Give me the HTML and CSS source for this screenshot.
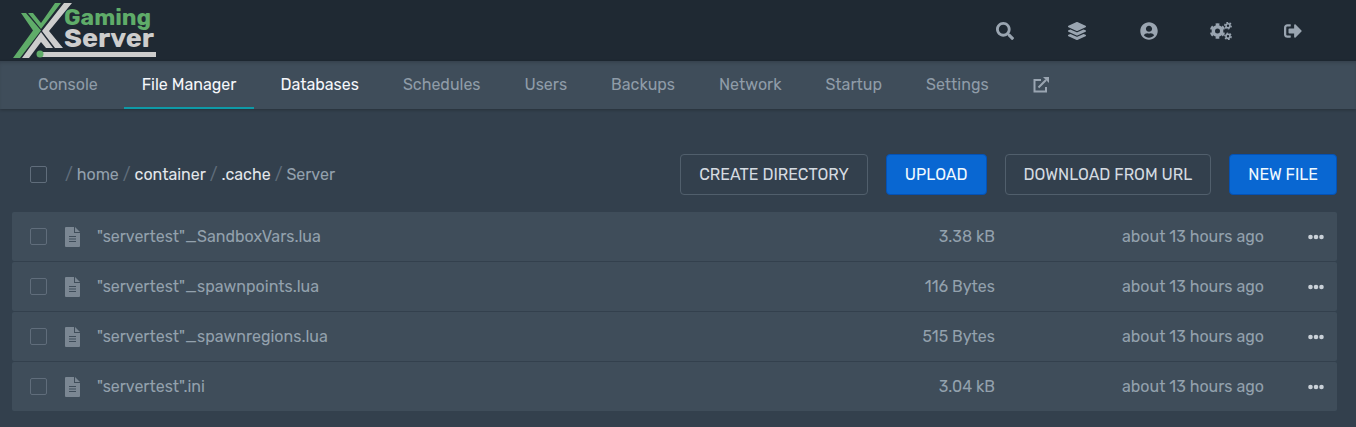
FILE: index.html
```
<!DOCTYPE html>
<html lang="en">
<head>
    <meta charset="UTF-8">
    <meta name="viewport" content="width=device-width, initial-scale=1.0">
    <title>File Manager | XGaming Server</title>
    <link rel="stylesheet" href="styles.css">
</head>
<body>
    <svg class="sprite" aria-hidden="true">
        <symbol id="icon-file" viewBox="0 0 15 20">
            <path fill-rule="evenodd" d="M1 0H9V6H15V19a1 1 0 0 1-1 1H1a1 1 0 0 1-1-1V1a1 1 0 0 1 1-1zM4 9V10H11V9zM4 11.500V12.500H11V11.500zM4 14V15H11V14z"/>
            <path d="M10 0L15 5H10z"/>
        </symbol>
        <symbol id="icon-dots" viewBox="0 0 16 6">
            <circle cx="2.500" cy="3" r="2.300"/>
            <circle cx="8" cy="3" r="2.300"/>
            <circle cx="13.500" cy="3" r="2.300"/>
        </symbol>
    </svg>
    <header class="topbar">
        <a class="logo" href="#" aria-label="XGaming Server">
            <svg width="160" height="61" viewBox="0 0 160 61">
                <g fill="#5fac69">
                    <path d="M21 13h5l15 17.500L20 58h-7l20-27.500z"/>
                    <path d="M28 13h5l8 10L55 3h6L41 29z"/>
                </g>
                <g fill="#cdcdcd">
                    <path d="M64 3h8L49 31l14 17h-8L42 31z"/>
                    <path d="M41 32l12 16h-7l-5-6-12 16h-7z"/>
                    <path d="M38 52h118v5H38z"/>
                </g>
                <circle cx="40" cy="54" r="3.500" fill="#5fac69"/>
                <text class="logo-text logo-green" x="64" y="25">Gaming</text>
                <text class="logo-text logo-grey" x="64" y="47">Server</text>
            </svg>
        </a>
        <nav class="top-links">
            <a href="#" aria-label="Search"><svg width="18" height="18" viewBox="0 0 512 512"><path d="M505 442.700L405.300 343c-4.500-4.500-10.600-7-17-7H372c27.600-35.300 44-79.700 44-128C416 93.100 322.900 0 208 0S0 93.100 0 208s93.100 208 208 208c48.300 0 92.700-16.400 128-44v16.300c0 6.400 2.500 12.500 7 17l99.700 99.700c9.400 9.400 24.600 9.400 33.900 0l28.300-28.300c9.400-9.400 9.400-24.600.1-34zM208 336c-70.700 0-128-57.200-128-128 0-70.700 57.200-128 128-128 70.700 0 128 57.200 128 128 0 70.700-57.200 128-128 128z"/></svg></a>
            <a href="#" aria-label="Servers"><svg width="18" height="18" viewBox="0 0 512 512"><path d="M12.400 148l233 105.700c6.800 3.100 14.500 3.100 21.300 0L499.600 148c16.500-7.500 16.500-32.500 0-40L266.700 2.300a25.600 25.600 0 0 0-21.300 0L12.400 108c-16.500 7.500-16.500 32.500 0 40zm487.200 88.300l-58.100-26.300-161.600 73.300c-7.600 3.400-15.600 5.100-23.900 5.100s-16.300-1.700-23.900-5.100L70.500 210l-58.100 26.300c-16.500 7.500-16.500 32.500 0 40l233 105.600c6.800 3.100 14.500 3.100 21.300 0l232.900-105.600c16.500-7.500 16.500-32.500 0-40zm0 127.800l-57.900-26.200-161.800 73.300c-7.600 3.400-15.600 5.200-23.900 5.200s-16.300-1.800-23.900-5.200L70.300 337.900l-57.900 26.200c-16.500 7.500-16.500 32.500 0 40l233 105.600c6.800 3.100 14.500 3.100 21.300 0l232.900-105.600c16.500-7.500 16.500-32.500 0-40z"/></svg></a>
            <a href="#" aria-label="Account"><svg width="18" height="18" viewBox="-8 0 512 512"><path d="M248 8C111 8 0 119 0 256s111 248 248 248 248-111 248-248S385 8 248 8zm0 96c48.600 0 88 39.400 88 88s-39.400 88-88 88-88-39.400-88-88 39.400-88 88-88zm0 344c-58.700 0-111.300-26.600-146.500-68.200 18.800-35.400 55.600-59.800 98.500-59.800 2.400 0 4.800.4 7.100 1.100 13 4.200 26.600 6.900 40.900 6.900 14.300 0 28-2.700 40.900-6.900 2.300-.7 4.700-1.100 7.100-1.100 42.900 0 79.700 24.400 98.500 59.800C359.300 421.400 306.700 448 248 448z"/></svg></a>
            <a href="#" aria-label="Admin"><svg class="gears" width="22" height="18" viewBox="0 0 22 18">
                <circle cx="7.500" cy="9" r="4.200" stroke-width="3.400"/>
                <circle cx="7.500" cy="9" r="6.500" stroke-width="2.400" stroke-dasharray="3.600 3.100" pathLength="40.200" transform="rotate(14 7.500 9)"/>
                <circle cx="18" cy="3.700" r="2" stroke-width="1.600"/>
                <circle cx="18" cy="3.700" r="3.200" stroke-width="1.400" stroke-dasharray="1.900 1.500" pathLength="20.400"/>
                <circle cx="18" cy="14.300" r="2" stroke-width="1.600"/>
                <circle cx="18" cy="14.300" r="3.200" stroke-width="1.400" stroke-dasharray="1.900 1.500" pathLength="20.400"/>
            </svg></a>
            <a href="#" aria-label="Sign out"><svg width="18" height="18" viewBox="0 0 512 512"><path d="M497 273L329 441c-15 15-41 4.500-41-17v-96H152c-13.300 0-24-10.700-24-24v-96c0-13.300 10.700-24 24-24h136V88c0-21.400 25.900-32 41-17l168 168c9.300 9.400 9.300 24.600 0 34zM192 436v-40c0-6.600-5.400-12-12-12H96c-17.700 0-32-14.300-32-32V160c0-17.700 14.300-32 32-32h84c6.600 0 12-5.400 12-12V76c0-6.600-5.400-12-12-12H96c-53 0-96 43-96 96v192c0 53 43 96 96 96h84c6.600 0 12-5.400 12-12z"/></svg></a>
        </nav>
    </header>
    <nav class="subnav">
        <a href="#">Console</a>
        <a href="#" class="active">File Manager</a>
        <a href="#" class="hover">Databases</a>
        <a href="#">Schedules</a>
        <a href="#">Users</a>
        <a href="#">Backups</a>
        <a href="#">Network</a>
        <a href="#">Startup</a>
        <a href="#">Settings</a>
        <a href="#" aria-label="Open in admin"><svg class="external" width="16" height="16" viewBox="0 0 16 16"><path d="M8 3H1.500v11.500H13V10M5.500 10.500L13 3"/><path class="tip" d="M10 0h6v6z"/></svg></a>
    </nav>
    <main class="content">
        <div class="toolbar">
            <input type="checkbox" class="check" aria-label="Select all files">
            <div class="breadcrumb">
                <span class="slash">/</span><span>home</span>
                <span class="slash">/</span><a href="#">container</a>
                <span class="slash">/</span><a href="#">.cache</a>
                <span class="slash">/</span><span>Server</span>
            </div>
            <div class="actions">
                <button type="button" class="btn">Create Directory</button>
                <button type="button" class="btn btn-primary">Upload</button>
                <button type="button" class="btn">Download from URL</button>
                <button type="button" class="btn btn-primary">New File</button>
            </div>
        </div>
        <table class="files">
            <tbody>
                <tr>
                    <td class="col-check"><input type="checkbox" class="check" id="file1" aria-labelledby="name1"></td>
                    <td class="col-icon"><svg width="15" height="20"><use href="#icon-file"/></svg></td>
                    <td><a href="#" id="name1">"servertest"_SandboxVars.lua</a></td>
                    <td class="col-size">3.38 kB</td>
                    <td class="col-date">about 13 hours ago</td>
                    <td class="col-menu"><button type="button" aria-label="More"><svg width="16" height="6"><use href="#icon-dots"/></svg></button></td>
                </tr>
                <tr>
                    <td class="col-check"><input type="checkbox" class="check" id="file2" aria-labelledby="name2"></td>
                    <td class="col-icon"><svg width="15" height="20"><use href="#icon-file"/></svg></td>
                    <td><a href="#" id="name2">"servertest"_spawnpoints.lua</a></td>
                    <td class="col-size">116 Bytes</td>
                    <td class="col-date">about 13 hours ago</td>
                    <td class="col-menu"><button type="button" aria-label="More"><svg width="16" height="6"><use href="#icon-dots"/></svg></button></td>
                </tr>
                <tr>
                    <td class="col-check"><input type="checkbox" class="check" id="file3" aria-labelledby="name3"></td>
                    <td class="col-icon"><svg width="15" height="20"><use href="#icon-file"/></svg></td>
                    <td><a href="#" id="name3">"servertest"_spawnregions.lua</a></td>
                    <td class="col-size">515 Bytes</td>
                    <td class="col-date">about 13 hours ago</td>
                    <td class="col-menu"><button type="button" aria-label="More"><svg width="16" height="6"><use href="#icon-dots"/></svg></button></td>
                </tr>
                <tr>
                    <td class="col-check"><input type="checkbox" class="check" id="file4" aria-labelledby="name4"></td>
                    <td class="col-icon"><svg width="15" height="20"><use href="#icon-file"/></svg></td>
                    <td><a href="#" id="name4">"servertest".ini</a></td>
                    <td class="col-size">3.04 kB</td>
                    <td class="col-date">about 13 hours ago</td>
                    <td class="col-menu"><button type="button" aria-label="More"><svg width="16" height="6"><use href="#icon-dots"/></svg></button></td>
                </tr>
            </tbody>
        </table>
    </main>
</body>
</html>
```

FILE: styles.css
```
* {
    padding: 0;
    margin: 0;
    box-sizing: border-box;
}

body {
    background: #33404d;
    color: #93a1ad;
    font-family: Rubik, Roboto, sans-serif;
    font-size: 16px;
    line-height: 20px;
}

a {
    color: inherit;
    text-decoration: none;
}

svg {
    display: block;
    fill: currentColor;
}

.sprite {
    display: none;
}

.topbar {
    display: flex;
    justify-content: space-between;
    background: #1f2933;
    padding-right: 27px;
}

.logo-text {
    font-weight: 700;
}

.logo-green {
    fill: #5fac69;
    font-size: 23px;
}

.logo-grey {
    fill: #cdcdcd;
    font-size: 27px;
}

.top-links {
    display: flex;
    color: #9aa5b1;
}

.top-links a {
    display: flex;
    align-items: center;
    justify-content: center;
    width: 72px;
}

.gears {
    fill: none;
    stroke: currentColor;
}

.subnav {
    display: flex;
    gap: 8px;
    padding: 0 20px;
    background: #3f4d5a;
    box-shadow: inset 0 3px 4px -2px rgba(0, 0, 0, 0.2), 0 1px 3px rgba(0, 0, 0, 0.25);
}

.subnav a {
    display: flex;
    align-items: center;
    height: 48px;
    padding: 0 18px;
    color: #8f9ca8;
}

.subnav .active,
.subnav .hover {
    color: #f5f7fa;
}

.subnav .active {
    box-shadow: inset 0 -2px #0e9aa7;
}

.external {
    fill: none;
    stroke: #9aa5b1;
    stroke-width: 2;
}

.external .tip {
    fill: #9aa5b1;
    stroke: none;
}

.content {
    padding: 45px 19px 16px 12px;
}

.toolbar {
    display: flex;
    align-items: center;
    padding-left: 18px;
    margin-bottom: 16px;
}

.check {
    display: block;
    appearance: none;
    width: 17px;
    height: 17px;
    border: 1px solid #606d7b;
    border-radius: 2px;
}

.breadcrumb {
    display: flex;
    gap: 4px;
    margin-left: 18px;
}

.breadcrumb a {
    color: #e4e7eb;
}

.slash {
    color: #606d7b;
}

.actions {
    display: flex;
    gap: 18px;
    margin-left: auto;
}

.btn {
    height: 41px;
    padding: 0 18px;
    border: 1px solid #515f6c;
    border-radius: 4px;
    background: transparent;
    color: #d5dbe1;
    font: inherit;
    text-transform: uppercase;
    cursor: pointer;
}

.btn-primary {
    background: #0967d2;
    border-color: #0552b5;
    color: #f0faff;
}

.files {
    width: 100%;
    border-spacing: 0 1px;
}

.files td {
    height: 49px;
    background: #3f4d5a;
    vertical-align: middle;
}

.files td:first-child {
    border-radius: 2px 0 0 2px;
}

.files td:last-child {
    border-radius: 0 2px 2px 0;
}

.col-check {
    width: 53px;
    padding-left: 18px;
}

.col-icon {
    width: 32px;
    color: #7b8793;
}

.col-size,
.col-date {
    text-align: right;
}

.col-date {
    width: 269px;
}

.col-menu {
    width: 73px;
    padding-right: 13px;
}

.col-menu button {
    display: block;
    margin-left: auto;
    padding: 8px 0;
    border: none;
    background: none;
    color: #cad1d8;
    cursor: pointer;
}
```
